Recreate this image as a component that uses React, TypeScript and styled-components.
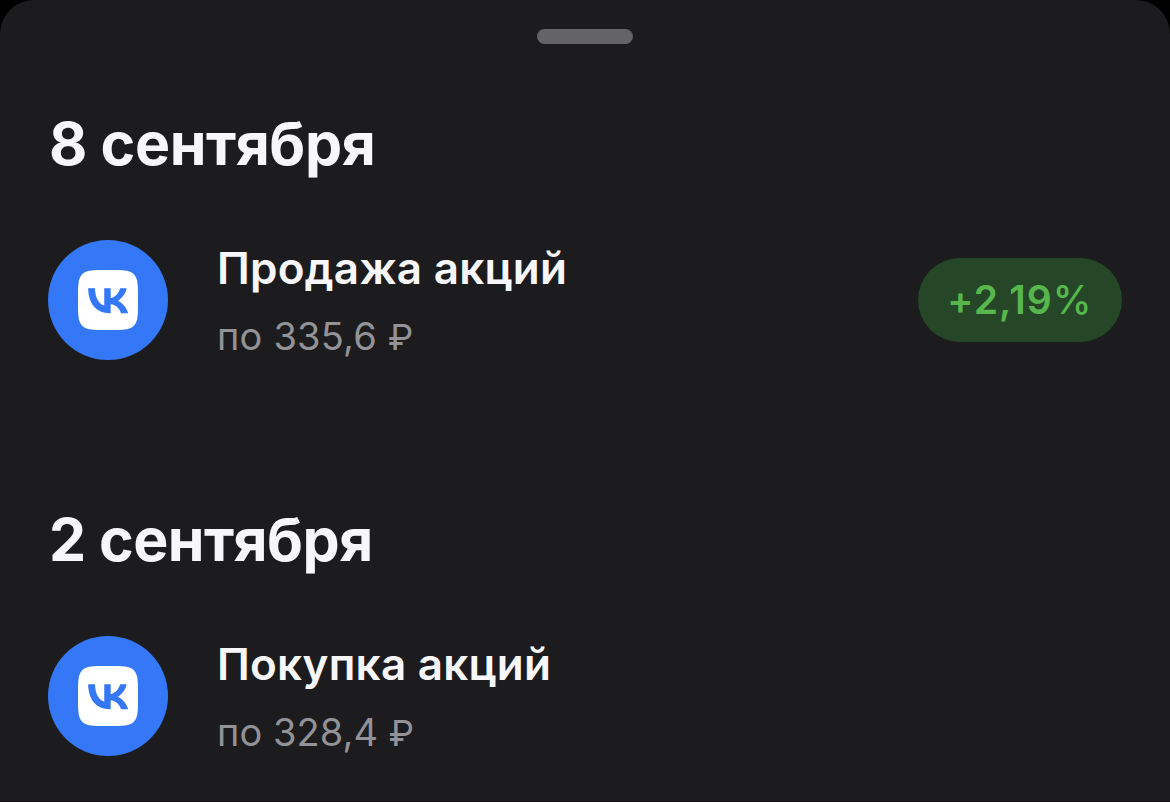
import React from "react";
import styled, { createGlobalStyle } from "styled-components";

const GlobalStyle = createGlobalStyle`
  * { box-sizing: border-box; }
  body {
    margin: 0;
    background: #000;
    font-family: Inter, "Liberation Sans", sans-serif;
    -webkit-font-smoothing: antialiased;
  }
`;

const Sheet = styled.main`
  display: flex;
  flex-direction: column;
  height: 802px;
  overflow: hidden;
  padding: 29px 48px 0;
  background: #1c1c1e;
  border-radius: 34px 34px 0 0;
  border-bottom: 1px solid #120a0e;
`;

const Grabber = styled.div`
  flex: none;
  align-self: center;
  width: 96px;
  height: 15px;
  border-radius: 8px;
  background: #646466;
`;

const DaySection = styled.section`
  flex: none;
  height: 396px;
  padding-top: 65px;
`;

const DayTitle = styled.h2<{ $tracking: number }>`
  margin: 0 0 0 1px;
  font-size: 59px;
  line-height: 70px;
  font-weight: 700;
  letter-spacing: ${(p) => p.$tracking}px;
  color: #f7f7f9;
  white-space: nowrap;
`;

const Operation = styled.article`
  display: flex;
  align-items: center;
  height: 120px;
  margin-top: 61px;
`;

const Avatar = styled.div`
  display: flex;
  align-items: center;
  justify-content: center;
  flex: none;
  width: 120px;
  height: 120px;
  border-radius: 50%;
  background: #3478f8;
`;

const Details = styled.div`
  flex: 1;
  margin-left: 49px;
  white-space: nowrap;
`;

const OperationName = styled.div`
  font-size: 44px;
  line-height: 52px;
  font-weight: 600;
  letter-spacing: 0.25px;
  color: #f7f7f9;
`;

const Price = styled.div<{ $tracking: number }>`
  margin-top: 19px;
  font-size: 38px;
  line-height: 46px;
  letter-spacing: ${(p) => p.$tracking}px;
  color: #929297;
`;

const Currency = styled.span`
  font-size: 36px;
  line-height: 1;
`;

const Profit = styled.div`
  display: flex;
  align-items: center;
  justify-content: center;
  width: 204px;
  height: 84px;
  border-radius: 42px;
  background: #254728;
  color: #57b74d;
  font-size: 39px;
  line-height: 46px;
  font-weight: 600;
  letter-spacing: 1.1px;
`;

const Percent = styled.span`
  font-weight: 500;
`;

const VkLogo = () => (
  <svg width="60" height="60" viewBox="0 0 48 48" aria-hidden="true">
    <path
      fill="#fff"
      d="M0 23.04C0 12.18 0 6.75 3.37 3.37 6.75 0 12.18 0 23.04 0h1.92c10.86 0 16.29 0 19.67 3.37C48 6.75 48 12.18 48 23.04v1.92c0 10.86 0 16.29-3.37 19.67C41.25 48 35.82 48 24.96 48h-1.92c-10.86 0-16.29 0-19.67-3.37C0 41.25 0 35.82 0 24.96z"
    />
    <path
      fill="#3478f8"
      d="M25.54 34.58c-10.94 0-17.18-7.5-17.44-19.98h5.48c.18 9.16 4.22 13.04 7.42 13.84V14.6h5.16v7.9c3.16-.34 6.48-3.94 7.6-7.9h5.16c-.86 4.88-4.46 8.48-7.02 9.96 2.56 1.2 6.66 4.34 8.22 10.02h-5.68c-1.22-3.8-4.26-6.74-8.28-7.14v7.14z"
    />
  </svg>
);

const days = [
  { date: "8 сентября", dateTracking: -0.4, name: "Продажа акций", price: "335,6", priceTracking: 0.2, profit: "+2,19" },
  { date: "2 сентября", dateTracking: -0.55, name: "Покупка акций", price: "328,4", priceTracking: 0.05, profit: "" },
];

export default function App() {
  return (
    <>
      <GlobalStyle />
      <Sheet>
        <Grabber />
        {days.map((day) => (
          <DaySection key={day.date}>
            <DayTitle $tracking={day.dateTracking}>{day.date}</DayTitle>
            <Operation>
              <Avatar>
                <VkLogo />
              </Avatar>
              <Details>
                <OperationName>{day.name}</OperationName>
                <Price $tracking={day.priceTracking}>
                  {`по ${day.price} `}
                  <Currency>₽</Currency>
                </Price>
              </Details>
              {day.profit && (
                <Profit>
                  {day.profit}
                  <Percent>%</Percent>
                </Profit>
              )}
            </Operation>
          </DaySection>
        ))}
      </Sheet>
    </>
  );
}
